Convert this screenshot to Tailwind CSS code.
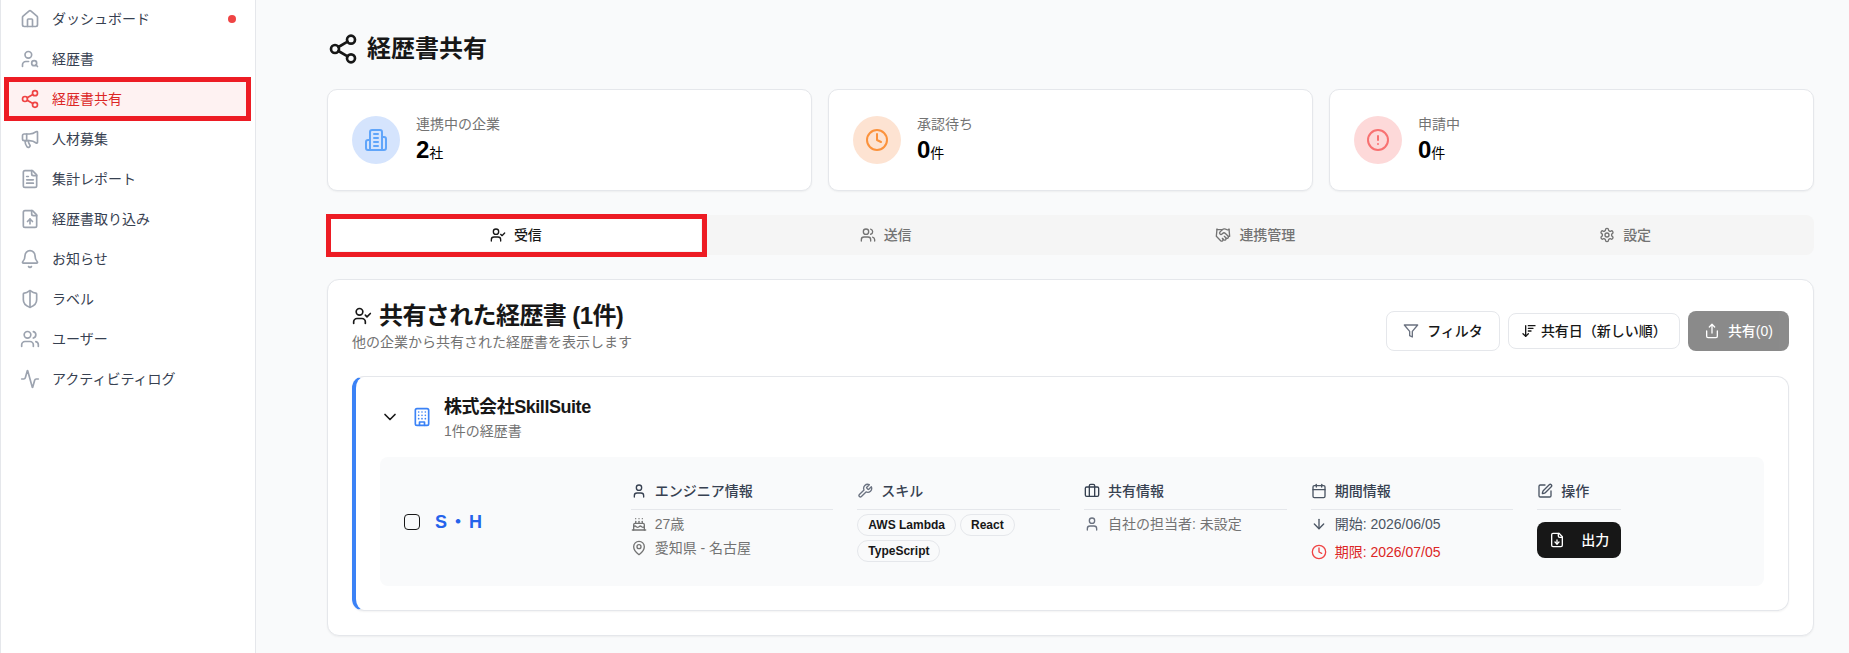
<!DOCTYPE html>
<html lang="ja">
<head>
    <meta charset="UTF-8">
    <meta name="viewport" content="width=device-width, initial-scale=1.0">
    <title>経歴書共有</title>
    <script src="https://cdn.jsdelivr.net/npm/@tailwindcss/browser@4"></script>
</head>
<body class="bg-[#f9fafb] font-['Liberation_Sans','Noto_Sans_CJK_JP',sans-serif] text-[#171717]">
    <!-- icon sprite -->
    <svg class="hidden">
        <defs>
            <symbol id="i-house" viewBox="0 0 24 24" fill="none" stroke="currentColor" stroke-width="2" stroke-linecap="round" stroke-linejoin="round"><path d="M15 21v-8a1 1 0 0 0-1-1h-4a1 1 0 0 0-1 1v8"/><path d="M3 10a2 2 0 0 1 .709-1.528l7-5.999a2 2 0 0 1 2.582 0l7 5.999A2 2 0 0 1 21 10v9a2 2 0 0 1-2 2H5a2 2 0 0 1-2-2z"/></symbol>
            <symbol id="i-user-search" viewBox="0 0 24 24" fill="none" stroke="currentColor" stroke-width="2" stroke-linecap="round" stroke-linejoin="round"><circle cx="10" cy="7" r="4"/><path d="M10.3 15H7a4 4 0 0 0-4 4v2"/><circle cx="17" cy="17" r="3"/><path d="m21 21-1.9-1.9"/></symbol>
            <symbol id="i-share-2" viewBox="0 0 24 24" fill="none" stroke="currentColor" stroke-width="2" stroke-linecap="round" stroke-linejoin="round"><circle cx="18" cy="5" r="3"/><circle cx="6" cy="12" r="3"/><circle cx="18" cy="19" r="3"/><line x1="8.59" x2="15.42" y1="13.51" y2="17.49"/><line x1="15.41" x2="8.59" y1="6.51" y2="10.49"/></symbol>
            <symbol id="i-megaphone" viewBox="0 0 24 24" fill="none" stroke="currentColor" stroke-width="2" stroke-linecap="round" stroke-linejoin="round"><path d="M11 6a13 13 0 0 0 8.4-2.8A1 1 0 0 1 21 4v12a1 1 0 0 1-1.6.8A13 13 0 0 0 11 14H5a2 2 0 0 1-2-2V8a2 2 0 0 1 2-2z"/><path d="M6 14a12 12 0 0 0 2.4 7.2 2 2 0 0 0 3.2-2.4A8 8 0 0 1 10 14"/><path d="M8 6v8"/></symbol>
            <symbol id="i-file-text" viewBox="0 0 24 24" fill="none" stroke="currentColor" stroke-width="2" stroke-linecap="round" stroke-linejoin="round"><path d="M15 2H6a2 2 0 0 0-2 2v16a2 2 0 0 0 2 2h12a2 2 0 0 0 2-2V7Z"/><path d="M14 2v4a2 2 0 0 0 2 2h4"/><path d="M10 9H8"/><path d="M16 13H8"/><path d="M16 17H8"/></symbol>
            <symbol id="i-file-up" viewBox="0 0 24 24" fill="none" stroke="currentColor" stroke-width="2" stroke-linecap="round" stroke-linejoin="round"><path d="M15 2H6a2 2 0 0 0-2 2v16a2 2 0 0 0 2 2h12a2 2 0 0 0 2-2V7Z"/><path d="M14 2v4a2 2 0 0 0 2 2h4"/><path d="M12 12v6"/><path d="m15 15-3-3-3 3"/></symbol>
            <symbol id="i-file-down" viewBox="0 0 24 24" fill="none" stroke="currentColor" stroke-width="2" stroke-linecap="round" stroke-linejoin="round"><path d="M15 2H6a2 2 0 0 0-2 2v16a2 2 0 0 0 2 2h12a2 2 0 0 0 2-2V7Z"/><path d="M14 2v4a2 2 0 0 0 2 2h4"/><path d="M12 18v-6"/><path d="m9 15 3 3 3-3"/></symbol>
            <symbol id="i-bell" viewBox="0 0 24 24" fill="none" stroke="currentColor" stroke-width="2" stroke-linecap="round" stroke-linejoin="round"><path d="M10.268 21a2 2 0 0 0 3.464 0"/><path d="M3.262 15.326A1 1 0 0 0 4 17h16a1 1 0 0 0 .74-1.673C19.41 13.956 18 12.499 18 8A6 6 0 0 0 6 8c0 4.499-1.411 5.956-2.738 7.326"/></symbol>
            <symbol id="i-shield-half" viewBox="0 0 24 24" fill="none" stroke="currentColor" stroke-width="2" stroke-linecap="round" stroke-linejoin="round"><path d="M20 13c0 5-3.5 7.5-7.66 8.95a1 1 0 0 1-.67-.01C7.5 20.5 4 18 4 13V6a1 1 0 0 1 1-1c2 0 4.5-1.2 6.24-2.72a1.17 1.17 0 0 1 1.52 0C14.51 3.81 17 5 19 5a1 1 0 0 1 1 1z"/><path d="M12 22V2"/></symbol>
            <symbol id="i-users" viewBox="0 0 24 24" fill="none" stroke="currentColor" stroke-width="2" stroke-linecap="round" stroke-linejoin="round"><path d="M16 21v-2a4 4 0 0 0-4-4H6a4 4 0 0 0-4 4v2"/><circle cx="9" cy="7" r="4"/><path d="M22 21v-2a4 4 0 0 0-3-3.87"/><path d="M16 3.13a4 4 0 0 1 0 7.75"/></symbol>
            <symbol id="i-activity" viewBox="0 0 24 24" fill="none" stroke="currentColor" stroke-width="2" stroke-linecap="round" stroke-linejoin="round"><path d="M22 12h-2.48a2 2 0 0 0-1.93 1.46l-2.35 8.36a.25.25 0 0 1-.48 0L9.24 2.18a.25.25 0 0 0-.48 0l-2.35 8.36A2 2 0 0 1 4.49 12H2"/></symbol>
            <symbol id="i-building-2" viewBox="0 0 24 24" fill="none" stroke="currentColor" stroke-width="2" stroke-linecap="round" stroke-linejoin="round"><path d="M6 22V4a2 2 0 0 1 2-2h8a2 2 0 0 1 2 2v18Z"/><path d="M6 12H4a2 2 0 0 0-2 2v6a2 2 0 0 0 2 2h2"/><path d="M18 9h2a2 2 0 0 1 2 2v9a2 2 0 0 1-2 2h-2"/><path d="M10 6h4"/><path d="M10 10h4"/><path d="M10 14h4"/><path d="M10 18h4"/></symbol>
            <symbol id="i-clock" viewBox="0 0 24 24" fill="none" stroke="currentColor" stroke-width="2" stroke-linecap="round" stroke-linejoin="round"><circle cx="12" cy="12" r="10"/><polyline points="12 6 12 12 16 14"/></symbol>
            <symbol id="i-alert" viewBox="0 0 24 24" fill="none" stroke="currentColor" stroke-width="2" stroke-linecap="round" stroke-linejoin="round"><circle cx="12" cy="12" r="10"/><line x1="12" x2="12" y1="8" y2="12"/><line x1="12" x2="12.01" y1="16" y2="16"/></symbol>
            <symbol id="i-user-check" viewBox="0 0 24 24" fill="none" stroke="currentColor" stroke-width="2" stroke-linecap="round" stroke-linejoin="round"><path d="M16 21v-2a4 4 0 0 0-4-4H6a4 4 0 0 0-4 4v2"/><circle cx="9" cy="7" r="4"/><polyline points="16 11 18 13 22 9"/></symbol>
            <symbol id="i-handshake" viewBox="0 0 24 24" fill="none" stroke="currentColor" stroke-width="2" stroke-linecap="round" stroke-linejoin="round"><path d="m11 17 2 2a1 1 0 1 0 3-3"/><path d="m14 14 2.5 2.5a1 1 0 1 0 3-3l-3.88-3.88a3 3 0 0 0-4.24 0l-.88.88a1 1 0 1 1-3-3l2.81-2.81a5.79 5.79 0 0 1 7.06-.87l.47.28a2 2 0 0 0 1.42.25L21 4"/><path d="m21 3 1 11h-2"/><path d="M3 3 2 14l6.5 6.5a1 1 0 1 0 3-3"/><path d="M3 4h8"/></symbol>
            <symbol id="i-settings" viewBox="0 0 24 24" fill="none" stroke="currentColor" stroke-width="2" stroke-linecap="round" stroke-linejoin="round"><path d="M12.22 2h-.44a2 2 0 0 0-2 2v.18a2 2 0 0 1-1 1.73l-.43.25a2 2 0 0 1-2 0l-.15-.08a2 2 0 0 0-2.73.73l-.22.38a2 2 0 0 0 .73 2.73l.15.1a2 2 0 0 1 1 1.72v.51a2 2 0 0 1-1 1.74l-.15.09a2 2 0 0 0-.73 2.73l.22.38a2 2 0 0 0 2.73.73l.15-.08a2 2 0 0 1 2 0l.43.25a2 2 0 0 1 1 1.73V20a2 2 0 0 0 2 2h.44a2 2 0 0 0 2-2v-.18a2 2 0 0 1 1-1.73l.43-.25a2 2 0 0 1 2 0l.15.08a2 2 0 0 0 2.73-.73l.22-.39a2 2 0 0 0-.73-2.73l-.15-.08a2 2 0 0 1-1-1.74v-.5a2 2 0 0 1 1-1.74l.15-.09a2 2 0 0 0 .73-2.73l-.22-.38a2 2 0 0 0-2.73-.73l-.15.08a2 2 0 0 1-2 0l-.43-.25a2 2 0 0 1-1-1.73V4a2 2 0 0 0-2-2z"/><circle cx="12" cy="12" r="3"/></symbol>
            <symbol id="i-filter" viewBox="0 0 24 24" fill="none" stroke="currentColor" stroke-width="2" stroke-linecap="round" stroke-linejoin="round"><polygon points="22 3 2 3 10 12.46 10 19 14 21 14 12.46 22 3"/></symbol>
            <symbol id="i-sort" viewBox="0 0 24 24" fill="none" stroke="currentColor" stroke-width="2" stroke-linecap="round" stroke-linejoin="round"><path d="m3 16 4 4 4-4"/><path d="M7 20V4"/><path d="M11 4h10"/><path d="M11 8h7"/><path d="M11 12h4"/></symbol>
            <symbol id="i-share" viewBox="0 0 24 24" fill="none" stroke="currentColor" stroke-width="2" stroke-linecap="round" stroke-linejoin="round"><path d="M4 12v8a2 2 0 0 0 2 2h12a2 2 0 0 0 2-2v-8"/><polyline points="16 6 12 2 8 6"/><line x1="12" x2="12" y1="2" y2="15"/></symbol>
            <symbol id="i-chevron" viewBox="0 0 24 24" fill="none" stroke="currentColor" stroke-width="2" stroke-linecap="round" stroke-linejoin="round"><path d="m6 9 6 6 6-6"/></symbol>
            <symbol id="i-building" viewBox="0 0 24 24" fill="none" stroke="currentColor" stroke-width="2" stroke-linecap="round" stroke-linejoin="round"><rect width="16" height="20" x="4" y="2" rx="2" ry="2"/><path d="M9 22v-4h6v4"/><path d="M8 6h.01"/><path d="M16 6h.01"/><path d="M12 6h.01"/><path d="M12 10h.01"/><path d="M12 14h.01"/><path d="M16 10h.01"/><path d="M16 14h.01"/><path d="M8 10h.01"/><path d="M8 14h.01"/></symbol>
            <symbol id="i-user" viewBox="0 0 24 24" fill="none" stroke="currentColor" stroke-width="2" stroke-linecap="round" stroke-linejoin="round"><path d="M19 21v-2a4 4 0 0 0-4-4H9a4 4 0 0 0-4 4v2"/><circle cx="12" cy="7" r="4"/></symbol>
            <symbol id="i-cake" viewBox="0 0 24 24" fill="none" stroke="currentColor" stroke-width="2" stroke-linecap="round" stroke-linejoin="round"><path d="M20 21v-8a2 2 0 0 0-2-2H6a2 2 0 0 0-2 2v8"/><path d="M4 16s.5-1 2-1 2.5 2 4 2 2.5-2 4-2 2.5 2 4 2 2-1 2-1"/><path d="M2 21h20"/><path d="M7 8v3"/><path d="M12 8v3"/><path d="M17 8v3"/><path d="M7 4h.01"/><path d="M12 4h.01"/><path d="M17 4h.01"/></symbol>
            <symbol id="i-pin" viewBox="0 0 24 24" fill="none" stroke="currentColor" stroke-width="2" stroke-linecap="round" stroke-linejoin="round"><path d="M20 10c0 6-8 12-8 12s-8-6-8-12a8 8 0 0 1 16 0Z"/><circle cx="12" cy="10" r="3"/></symbol>
            <symbol id="i-wrench" viewBox="0 0 24 24" fill="none" stroke="currentColor" stroke-width="2" stroke-linecap="round" stroke-linejoin="round"><path d="M14.7 6.3a1 1 0 0 0 0 1.4l1.6 1.6a1 1 0 0 0 1.4 0l3.77-3.77a6 6 0 0 1-7.94 7.94l-6.91 6.91a2.12 2.12 0 0 1-3-3l6.91-6.91a6 6 0 0 1 7.94-7.94l-3.76 3.76z"/></symbol>
            <symbol id="i-briefcase" viewBox="0 0 24 24" fill="none" stroke="currentColor" stroke-width="2" stroke-linecap="round" stroke-linejoin="round"><rect width="20" height="14" x="2" y="6" rx="2"/><path d="M16 20V4a2 2 0 0 0-2-2h-4a2 2 0 0 0-2 2v16"/></symbol>
            <symbol id="i-calendar" viewBox="0 0 24 24" fill="none" stroke="currentColor" stroke-width="2" stroke-linecap="round" stroke-linejoin="round"><path d="M8 2v4"/><path d="M16 2v4"/><rect width="18" height="18" x="3" y="4" rx="2"/><path d="M3 10h18"/></symbol>
            <symbol id="i-arrow-down" viewBox="0 0 24 24" fill="none" stroke="currentColor" stroke-width="2" stroke-linecap="round" stroke-linejoin="round"><path d="M12 5v14"/><path d="m19 12-7 7-7-7"/></symbol>
            <symbol id="i-pen" viewBox="0 0 24 24" fill="none" stroke="currentColor" stroke-width="2" stroke-linecap="round" stroke-linejoin="round"><path d="M12 3H5a2 2 0 0 0-2 2v14a2 2 0 0 0 2 2h14a2 2 0 0 0 2-2v-7"/><path d="M18.375 2.625a1 1 0 0 1 3 3l-9 9a2 2 0 0 1-.88.51l-2.87.82a.5.5 0 0 1-.62-.62l.82-2.87a2 2 0 0 1 .51-.88z"/></symbol>
        </defs>
    </svg>

    <div class="flex h-[653px] overflow-hidden">
        <!-- Sidebar -->
        <aside class="w-[256px] shrink-0 bg-white border-l border-r border-gray-200 pl-[7px] pr-[7px] pt-px">
            <nav class="flex flex-col gap-1 text-sm text-[#374151]">
                <a class="flex items-center gap-3 h-9 px-3 rounded-md">
                    <svg class="w-5 h-5 text-[#9ca3af]"><use href="#i-house"/></svg>
                    <span>ダッシュボード</span>
                    <span class="ml-auto w-2 h-2 rounded-full bg-[#ef4444]"></span>
                </a>
                <a class="flex items-center gap-3 h-9 px-3 rounded-md">
                    <svg class="w-5 h-5 text-[#9ca3af]"><use href="#i-user-search"/></svg>
                    <span>経歴書</span>
                </a>
                <a class="relative flex items-center gap-3 h-9 px-3 bg-[#fef2f2] text-[#dc2626]">
                    <svg class="w-5 h-5 text-[#ef4444]"><use href="#i-share-2"/></svg>
                    <span>経歴書共有</span>
                    <span class="absolute -left-1 -top-1 -bottom-1 -right-[3px] border-[5px] border-[#ed1c24]"></span>
                </a>
                <a class="flex items-center gap-3 h-9 px-3 rounded-md">
                    <svg class="w-5 h-5 text-[#9ca3af]"><use href="#i-megaphone"/></svg>
                    <span>人材募集</span>
                </a>
                <a class="flex items-center gap-3 h-9 px-3 rounded-md">
                    <svg class="w-5 h-5 text-[#9ca3af]"><use href="#i-file-text"/></svg>
                    <span>集計レポート</span>
                </a>
                <a class="flex items-center gap-3 h-9 px-3 rounded-md">
                    <svg class="w-5 h-5 text-[#9ca3af]"><use href="#i-file-up"/></svg>
                    <span>経歴書取り込み</span>
                </a>
                <a class="flex items-center gap-3 h-9 px-3 rounded-md">
                    <svg class="w-5 h-5 text-[#9ca3af]"><use href="#i-bell"/></svg>
                    <span>お知らせ</span>
                </a>
                <a class="flex items-center gap-3 h-9 px-3 rounded-md">
                    <svg class="w-5 h-5 text-[#9ca3af]"><use href="#i-shield-half"/></svg>
                    <span>ラベル</span>
                </a>
                <a class="flex items-center gap-3 h-9 px-3 rounded-md">
                    <svg class="w-5 h-5 text-[#9ca3af]"><use href="#i-users"/></svg>
                    <span>ユーザー</span>
                </a>
                <a class="flex items-center gap-3 h-9 px-3 rounded-md">
                    <svg class="w-5 h-5 text-[#9ca3af]"><use href="#i-activity"/></svg>
                    <span>アクティビティログ</span>
                </a>
            </nav>
        </aside>

        <!-- Main -->
        <main class="flex-1 min-w-0 pl-[71px] pr-[35px] pt-[33px]">
            <h1 class="flex items-center gap-2 h-8 mb-6 text-2xl font-bold">
                <svg class="w-8 h-8"><use href="#i-share-2"/></svg>
                経歴書共有
            </h1>

            <!-- Stat cards -->
            <div class="grid grid-cols-3 gap-4 mb-6">
                <div class="flex items-center gap-4 p-6 bg-white border border-gray-200 rounded-[10px] shadow-xs">
                    <div class="flex items-center justify-center w-12 h-12 rounded-full bg-[#d5e4fd]">
                        <svg class="w-6 h-6 text-[#60a5fa]"><use href="#i-building-2"/></svg>
                    </div>
                    <div>
                        <p class="text-sm text-[#737373]">連携中の企業</p>
                        <p class="text-2xl leading-8 font-bold text-black">2<span class="text-sm font-normal">社</span></p>
                    </div>
                </div>
                <div class="flex items-center gap-4 p-6 bg-white border border-gray-200 rounded-[10px] shadow-xs">
                    <div class="flex items-center justify-center w-12 h-12 rounded-full bg-[#fde3d2]">
                        <svg class="w-6 h-6 text-[#fb923c]"><use href="#i-clock"/></svg>
                    </div>
                    <div>
                        <p class="text-sm text-[#737373]">承認待ち</p>
                        <p class="text-2xl leading-8 font-bold text-black">0<span class="text-sm font-normal">件</span></p>
                    </div>
                </div>
                <div class="flex items-center gap-4 p-6 bg-white border border-gray-200 rounded-[10px] shadow-xs">
                    <div class="flex items-center justify-center w-12 h-12 rounded-full bg-[#fdd9d9]">
                        <svg class="w-6 h-6 text-[#f87171]"><use href="#i-alert"/></svg>
                    </div>
                    <div>
                        <p class="text-sm text-[#737373]">申請中</p>
                        <p class="text-2xl leading-8 font-bold text-black">0<span class="text-sm font-normal">件</span></p>
                    </div>
                </div>
            </div>

            <!-- Tabs -->
            <div class="grid grid-cols-4 h-10 p-1 mb-6 bg-[#f5f5f5] rounded-lg text-sm font-medium text-[#737373]">
                <button class="relative flex items-center justify-center gap-2 bg-white text-[#171717]">
                    <svg class="w-4 h-4"><use href="#i-user-check"/></svg>
                    受信
                    <span class="absolute -left-[5px] -top-[5px] -bottom-[6px] -right-[6px] border-[5px] border-[#ed1c24]"></span>
                </button>
                <button class="flex items-center justify-center gap-2">
                    <svg class="w-4 h-4"><use href="#i-users"/></svg>
                    送信
                </button>
                <button class="flex items-center justify-center gap-2">
                    <svg class="w-4 h-4"><use href="#i-handshake"/></svg>
                    連携管理
                </button>
                <button class="flex items-center justify-center gap-2">
                    <svg class="w-4 h-4"><use href="#i-settings"/></svg>
                    設定
                </button>
            </div>

            <!-- Shared resumes -->
            <section class="p-6 bg-white border border-gray-200 rounded-xl shadow-xs">
                <div class="flex items-end justify-between mb-6">
                    <div>
                        <h2 class="flex items-center gap-[7px] h-6 mb-1 text-2xl font-bold tracking-tight">
                            <svg class="w-5 h-5"><use href="#i-user-check"/></svg>
                            共有された経歴書 (1件)
                        </h2>
                        <p class="text-sm text-[#737373]">他の企業から共有された経歴書を表示します</p>
                    </div>
                    <div class="flex items-center gap-2 text-sm font-medium mb-px">
                        <button class="flex items-center gap-2 h-10 px-4 bg-white border border-gray-200 rounded-lg">
                            <svg class="w-4 h-4 text-[#6b7280]"><use href="#i-filter"/></svg>
                            フィルタ
                        </button>
                        <button class="flex items-center gap-1 h-9 px-3 bg-white border border-gray-200 rounded-lg">
                            <svg class="w-4 h-4"><use href="#i-sort"/></svg>
                            共有日（新しい順）
                        </button>
                        <button class="flex items-center gap-2 h-10 px-4 bg-[#171717] text-white rounded-lg opacity-50">
                            <svg class="w-4 h-4"><use href="#i-share"/></svg>
                            共有(0)
                        </button>
                    </div>
                </div>

                <div class="border border-gray-200 border-l-4 border-l-[#3b82f6] rounded-xl pl-6 pr-6 pt-4 pb-6 shadow-xs">
                    <div class="flex items-center gap-3 mb-4">
                        <svg class="w-5 h-5"><use href="#i-chevron"/></svg>
                        <svg class="w-5 h-5 text-[#3b82f6]"><use href="#i-building"/></svg>
                        <div>
                            <p class="text-lg font-bold tracking-tight">株式会社SkillSuite</p>
                            <p class="text-sm text-[#737373]">1件の経歴書</p>
                        </div>
                    </div>

                    <div class="grid grid-cols-6 gap-6 p-6 bg-[#f9fafb] rounded-lg text-sm">
                        <div class="flex items-center gap-[15px]">
                            <input type="checkbox" class="appearance-none w-4 h-4 border border-[#171717] rounded-[4px]">
                            <span class="text-lg font-semibold tracking-[2px] text-[#2563eb]">S・H</span>
                        </div>
                        <div>
                            <div class="flex items-center gap-2 pb-2 mb-1 border-b border-gray-200 font-medium text-[#374151]">
                                <svg class="w-4 h-4"><use href="#i-user"/></svg>
                                エンジニア情報
                            </div>
                            <div class="flex flex-col gap-1 text-[#737373]">
                                <div class="flex items-center gap-2"><svg class="w-4 h-4"><use href="#i-cake"/></svg>27歳</div>
                                <div class="flex items-center gap-2"><svg class="w-4 h-4"><use href="#i-pin"/></svg>愛知県 - 名古屋</div>
                            </div>
                        </div>
                        <div>
                            <div class="flex items-center gap-2 pb-2 mb-1 border-b border-gray-200 font-medium text-[#374151]">
                                <svg class="w-4 h-4 text-[#6b7280]"><use href="#i-wrench"/></svg>
                                スキル
                            </div>
                            <div class="flex flex-wrap gap-1 text-xs font-bold">
                                <span class="px-[10px] py-[2px] border border-gray-200 rounded-full">AWS Lambda</span>
                                <span class="px-[10px] py-[2px] border border-gray-200 rounded-full">React</span>
                                <span class="px-[10px] py-[2px] border border-gray-200 rounded-full">TypeScript</span>
                            </div>
                        </div>
                        <div>
                            <div class="flex items-center gap-2 pb-2 mb-1 border-b border-gray-200 font-medium text-[#374151]">
                                <svg class="w-4 h-4"><use href="#i-briefcase"/></svg>
                                共有情報
                            </div>
                            <div class="flex items-center gap-2 text-[#737373]"><svg class="w-4 h-4 text-[#6b7280]"><use href="#i-user"/></svg>自社の担当者: 未設定</div>
                        </div>
                        <div>
                            <div class="flex items-center gap-2 pb-2 mb-1 border-b border-gray-200 font-medium text-[#374151]">
                                <svg class="w-4 h-4 text-[#4b5563]"><use href="#i-calendar"/></svg>
                                期間情報
                            </div>
                            <div class="flex flex-col gap-2">
                                <div class="flex items-center gap-2 text-[#4b5563]"><svg class="w-4 h-4"><use href="#i-arrow-down"/></svg>開始: 2026/06/05</div>
                                <div class="flex items-center gap-2 text-[#dc2626]"><svg class="w-4 h-4 text-[#ef4444]"><use href="#i-clock"/></svg>期限: 2026/07/05</div>
                            </div>
                        </div>
                        <div class="justify-self-start">
                            <div class="flex items-center gap-2 pb-2 mb-3 border-b border-gray-200 font-medium text-[#374151]">
                                <svg class="w-4 h-4 text-[#4b5563]"><use href="#i-pen"/></svg>
                                操作
                            </div>
                            <button class="flex items-center gap-4 h-9 w-[84px] px-3 bg-[#171717] text-white font-medium rounded-lg">
                                <svg class="w-4 h-4"><use href="#i-file-down"/></svg>
                                出力
                            </button>
                        </div>
                    </div>
                </div>
            </section>
        </main>
    </div>
</body>
</html>
